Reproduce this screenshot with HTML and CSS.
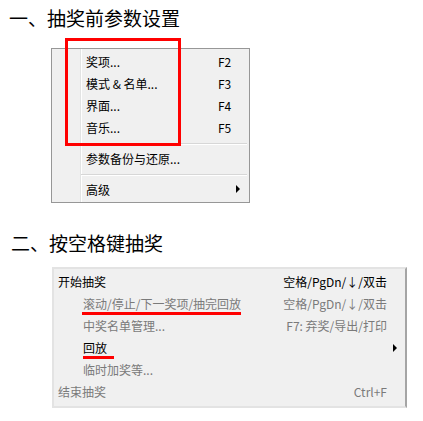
FILE: index.html
```html
<!DOCTYPE html>
<html lang="zh-CN">

<head>
    <meta charset="UTF-8">
    <title>抽奖设置</title>
    <link rel="stylesheet" href="styles.css">
</head>

<body>
    <h2 class="title">一、抽奖前参数设置</h2>
    <div class="menu1">
        <div class="red-box"></div>
        <div class="item"><span class="label">奖项...</span><span class="key">F2</span></div>
        <div class="item"><span class="label">模式 &amp; 名单...</span><span class="key">F3</span></div>
        <div class="item"><span class="label">界面...</span><span class="key">F4</span></div>
        <div class="item"><span class="label">音乐...</span><span class="key">F5</span></div>
        <div class="sep"></div>
        <div class="item"><span class="label">参数备份与还原...</span></div>
        <div class="sep"></div>
        <div class="item"><span class="label">高级</span><span class="key"></span><span class="arrow"></span></div>
    </div>

    <h2 class="title title2">二、按空格键抽奖</h2>
    <div class="menu2">
        <div class="row"><span>开始抽奖</span><span class="short">空格/PgDn/↓/双击</span><span class="arr"></span></div>
        <div class="row sub grey"><span class="mark">滚动/停止/下一奖项/抽完回放</span><span class="short">空格/PgDn/↓/双击</span><span class="arr"></span></div>
        <div class="row sub grey"><span>中奖名单管理...</span><span class="short">F7: 弃奖/导出/打印</span><span class="arr"></span></div>
        <div class="row sub"><span class="mark mark-short">回放</span><span class="short"></span><span class="arr"><i class="tri"></i></span></div>
        <div class="row sub grey"><span>临时加奖等...</span><span class="short"></span><span class="arr"></span></div>
        <div class="row grey"><span>结束抽奖</span><span class="short">Ctrl+F</span><span class="arr"></span></div>
    </div>
</body>

</html>
```

FILE: styles.css
```css
* {
    padding: 0;
    margin: 0;
    box-sizing: border-box;
}

body {
    background: #fff;
    font-family: "Noto Sans CJK SC", sans-serif;
    color: #000;
}

.title {
    font-size: 19px;
    font-weight: normal;
    line-height: 24px;
    margin-top: 6px;
    padding-left: 9px;
}

.title2 {
    margin-top: 28px;
    padding-left: 11px;
}

/* 第一個選單 */
.menu1 {
    position: relative;
    width: 199px;
    margin: 18px 0 0 51px;
    padding: 2px 2px 1px 2px;
    border: 1px solid #979797;
    background: linear-gradient(to right, #f0f0f0 28px, #e2e3e3 28px, #e2e3e3 29px, #fff 29px, #fff 30px, #f0f0f0 30px);
    font-size: 12px;
}

.item {
    display: flex;
    align-items: center;
    height: 22px;
    line-height: 22px;
    padding-left: 32px;
}

.item .label {
    width: 132px;
}

.item .key {
    flex: 1;
}

.arrow {
    width: 0;
    height: 0;
    border-top: 4px solid transparent;
    border-bottom: 4px solid transparent;
    border-left: 4px solid #000;
    margin: 0 7px 3px 0;
}

.sep {
    height: 2px;
    margin: 4px 0 3px 27px;
    border-top: 1px solid #d7d7d7;
    border-bottom: 1px solid #fff;
}

.red-box {
    position: absolute;
    left: 13px;
    top: -11px;
    width: 116px;
    height: 108px;
    border: 3px solid #ff0000;
}

/* 第二個選單 */
.menu2 {
    width: 355px;
    margin: 12px 0 0 52px;
    padding: 2px 0 3px 4px;
    border: 2px solid #e3e3e3;
    border-right: 2px solid #a5a5a5;
    background: #f0f0f0;
    font-size: 12px;
}

.row {
    display: flex;
    align-items: center;
    height: 22px;
    line-height: 22px;
}

.row.sub {
    padding-left: 25px;
}

.row.grey {
    color: #7a7a7a;
}

.short {
    margin-left: auto;
}

.arr {
    width: 18px;
    display: flex;
    align-items: center;
    padding-left: 6px;
}

.tri {
    display: block;
    width: 0;
    height: 0;
    border-top: 4px solid transparent;
    border-bottom: 4px solid transparent;
    border-left: 4px solid #000;
}

.mark {
    display: inline-block;
    line-height: 16px;
    margin-top: 3px;
    margin-left: -1px;
    padding-left: 1px;
    border-bottom: 3px solid #ff0000;
}

.mark-short {
    margin-left: 0;
    padding-left: 0;
    padding-right: 7px;
    color: #000;
}
```
